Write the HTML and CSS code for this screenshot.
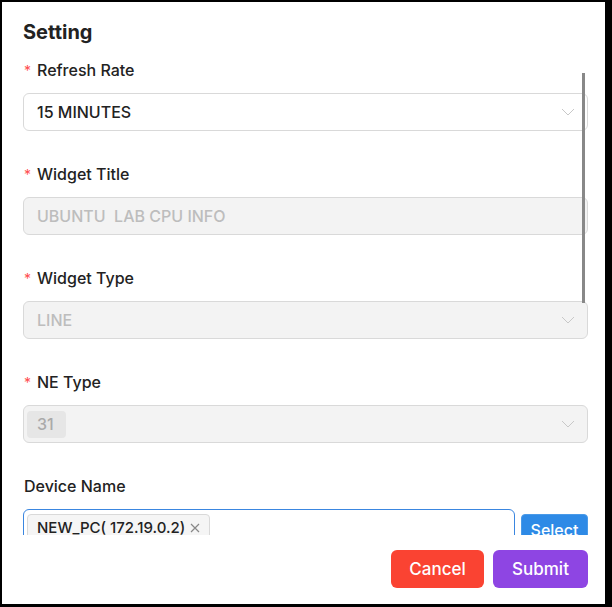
FILE: index.html
```html
<!DOCTYPE html>
<html>
<head>
<meta charset="utf-8">
<link rel="stylesheet" href="styles.css">
</head>
<body>
<div class="frame">
  <h1 class="title">Setting</h1>
  <div class="scroll">
    <div class="field">
      <label class="label"><span class="req">*</span>Refresh Rate</label>
      <div class="input select">
        <span class="value">15 MINUTES</span>
        <svg class="chev" width="14" height="8" viewBox="0 0 14 8"><path d="M1 1 L7 7 L13 1" fill="none" stroke="#c8c8c8" stroke-width="1"/></svg>
      </div>
    </div>
    <div class="field">
      <label class="label"><span class="req">*</span>Widget Title</label>
      <div class="input disabled">
        <span class="value">UBUNTU&nbsp; LAB CPU INFO</span>
      </div>
    </div>
    <div class="field">
      <label class="label"><span class="req">*</span>Widget Type</label>
      <div class="input select disabled">
        <span class="value">LINE</span>
        <svg class="chev" width="14" height="8" viewBox="0 0 14 8"><path d="M1 1 L7 7 L13 1" fill="none" stroke="#c8c8c8" stroke-width="1"/></svg>
      </div>
    </div>
    <div class="field">
      <label class="label"><span class="req">*</span>NE Type</label>
      <div class="input select disabled tagged">
        <span class="tag tag-dis">31</span>
        <svg class="chev" width="14" height="8" viewBox="0 0 14 8"><path d="M1 1 L7 7 L13 1" fill="none" stroke="#c8c8c8" stroke-width="1"/></svg>
      </div>
    </div>
    <div class="field">
      <label class="label">Device Name</label>
      <div class="device-row">
        <div class="input focus tagged multi">
          <span class="tag">NEW_PC( 172.19.0.2)<svg class="x" width="10" height="10" viewBox="0 0 10 10"><path d="M1 1 L9 9 M9 1 L1 9" stroke="#888" stroke-width="1.2" fill="none"/></svg></span>
        </div>
        <button class="btn-select">Select</button>
      </div>
    </div>
    <div class="scrollbar"></div>
  </div>
  <div class="footer">
    <button class="btn cancel">Cancel</button>
    <button class="btn submit">Submit</button>
  </div>
</div>
</body>
</html>
```

FILE: styles.css
```css
* { box-sizing: border-box; }
html, body { margin: 0; padding: 0; background: #000; }
body { font-family: Inter, "Open Sans", "Liberation Sans", sans-serif; color: #222; }
.frame {
  width: 612px;
  height: 607px;
  background: #fff;
  border-style: solid;
  border-color: #000;
  border-width: 2px 7px 3px 2px;
  padding: 0 17px 0 21px;
  position: relative;
  display: flex;
  flex-direction: column;
}
.title {
  margin: 16px 0 0 0;
  font-size: 20px;
  line-height: 28px;
  font-weight: 700;
  color: #222;
}
.scroll {
  height: 489px;
  overflow: hidden;
  position: relative;
  padding-top: 12px;
  flex: none;
}
.field { margin-bottom: 31px; }
.label {
  display: flex;
  align-items: center;
  height: 24px;
  font-size: 16px;
  font-weight: 500;
  color: #222;
  margin-bottom: 11px;
  margin-left: 1px;
}
.req {
  color: #ff4d4f;
  font-size: 14px;
  font-weight: 400;
  margin-right: 6px;
  width: 7px;
}
.input {
  height: 38px;
  border: 1px solid #d9d9d9;
  border-radius: 6px;
  display: flex;
  align-items: center;
  padding: 0 12px 0 13px;
  font-size: 16px;
  font-weight: 500;
  background: #fff;
}
.input .value { flex: 1; }
.chev { margin-left: auto; }
.disabled { background: #f3f3f3; color: #bdbdbd; }
.tagged { padding-left: 3px; }
.tag {
  display: inline-flex;
  align-items: center;
  height: 27px;
  padding: 0 10px;
  border-radius: 4px;
  font-size: 16px;
}
.tag-dis { background: #e6e6e6; color: #aaa; width: 39px; }
.device-row { display: flex; gap: 6px; align-items: flex-start; }
.multi {
  flex: 1;
  height: 40px;
  align-items: flex-start;
  padding-top: 4px;
}
.focus { border-color: #3a86e0; }
.multi .tag {
  background: #f5f5f5;
  border: 1px solid #d9d9d9;
  color: #222;
  height: 27px;
  padding: 0 9px;
  font-size: 15px;
}
.x { margin-left: 5px; }
.btn-select {
  margin-top: 5px;
  width: 67px;
  height: 32px;
  background: #2e8ae6;
  color: #fff;
  border: 1px solid #4a9ae8;
  border-radius: 4px;
  font-family: inherit;
  font-size: 16px;
  font-weight: 500;
  padding: 0;
}
.scrollbar {
  position: absolute;
  left: 559px;
  top: 27px;
  width: 3px;
  height: 230px;
  background: #888;
}
.footer {
  display: flex;
  justify-content: flex-end;
  gap: 9px;
  margin-top: 15px;
}
.btn {
  height: 38px;
  border: none;
  border-radius: 6px;
  color: #fff;
  font-family: inherit;
  font-size: 17px;
  font-weight: 500;
  padding: 0;
}
.cancel { width: 93px; background: #fa4332; }
.submit { width: 95px; background: #8e45e3; }
```
